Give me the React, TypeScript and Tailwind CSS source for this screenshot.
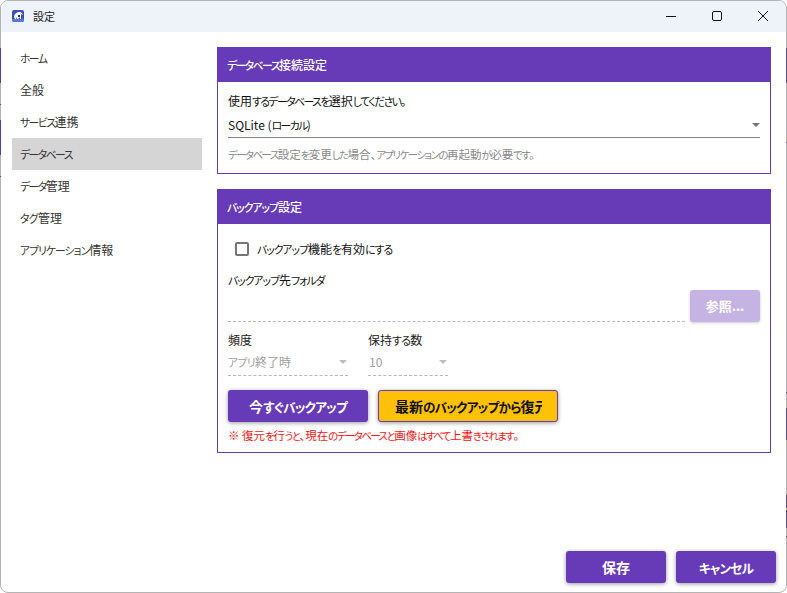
const FONT = "font-['Noto_Sans_CJK_JP','Noto_Sans',sans-serif] [font-feature-settings:'palt']";

type Fit = 'tight' | 'mid' | 'loose';

const fitClass: Record<Fit, string> = {
  tight: 'text-[0.9em] tracking-[-0.14em]',
  mid: 'text-[0.9em] tracking-[-0.09em]',
  loose: 'text-[0.9em] tracking-[-0.06em]',
};

const navItems: { label: string; fit: Fit }[] = [
  { label: 'ホーム', fit: 'tight' },
  { label: '全般', fit: 'tight' },
  { label: 'サービス連携', fit: 'tight' },
  { label: 'データベース', fit: 'tight' },
  { label: 'データ管理', fit: 'tight' },
  { label: 'タグ管理', fit: 'loose' },
  { label: 'アプリケーション情報', fit: 'mid' },
];

// slivers of the window behind this one, showing at the edges: [top, height]
const leftSlivers = [[48, 35], [104, 1], [120, 35], [176, 1]];
const rightSlivers = [[48, 35], [142, 1], [392, 1], [408, 32], [495, 13], [510, 18], [536, 1]];

// the reference font has much narrower kana than Noto, so kana runs get tightened
function Jp({ text, fit = 'tight' }: { text: string; fit?: Fit }) {
  return (
    <>
      {text.split(/([\u3040-\u30ff]+)/).map((part, i) =>
        i % 2 === 1 ? (
          <span key={i} className={fitClass[fit]}>{part}</span>
        ) : (
          part
        )
      )}
    </>
  );
}

function Arrow({ muted }: { muted?: boolean }) {
  return (
    <svg width="8" height="4" viewBox="0 0 8 4" className="shrink-0">
      <path d="M0 0h8L4 4z" fill={muted ? '#bdbdbd' : '#757575'} />
    </svg>
  );
}

function Panel({ title, fit, children }: { title: string; fit?: Fit; children: React.ReactNode }) {
  return (
    <section className="border border-[#673ab7] bg-white">
      <h2 className="flex h-[34px] items-center bg-[#673ab7] px-[9px] text-[12px] font-medium text-white">
        <span><Jp text={title} fit={fit} /></span>
      </h2>
      {children}
    </section>
  );
}

function PurpleButton({ label, className }: { label: string; className: string }) {
  return (
    <button className={`flex h-8 items-center justify-center rounded-[3px] bg-[#673ab7] text-[14px] font-bold text-white shadow-[0_1px_4px_rgba(0,0,0,0.4)] ${className}`}>
      <span><Jp text={label} fit="loose" /></span>
    </button>
  );
}

export default function App() {
  return (
    <div className={`${FONT} relative h-[593px] w-[787px] overflow-hidden bg-white text-[12px] text-[#1a1a1a]`}>
      <div className="flex h-[593px] flex-col overflow-hidden rounded-[8px] border border-[#b4b4b4] bg-white">
        {/* title bar */}
        <header className="flex h-[31px] shrink-0 items-center bg-[#eef2f9]">
          <svg width="12" height="12" viewBox="0 0 12 12" className="mb-[2px] ml-[11px]">
            <rect width="12" height="12" rx="2" fill="#3b50b4" />
            <path d="M0 9h12v1a2 2 0 0 1-2 2H2a2 2 0 0 1-2-2z" fill="#5b78d8" />
            <path d="M2 7c0-3 3-5 6-5 1 0 2 1 3 3L9 4v5H8V7L6 9H5V7L4 9H3z" fill="#ffffff" />
            <path d="M6 5h2v2H6z" fill="#27307e" />
          </svg>
          <span className="ml-[9px] text-[11px] text-[#222]">設定</span>
          <div className="ml-auto flex items-center">
            <svg width="46" height="31" viewBox="0 0 46 31"><path d="M18 15.5h10" stroke="#111" strokeWidth="1" /></svg>
            <svg width="46" height="31" viewBox="0 0 46 31"><rect x="18.5" y="10.5" width="9" height="9" rx="1.5" fill="none" stroke="#111" strokeWidth="1" /></svg>
            <svg width="46" height="31" viewBox="0 0 46 31"><path d="M18 10l10 10M28 10L18 20" stroke="#111" strokeWidth="1" /></svg>
          </div>
        </header>

        <div className="flex min-h-0 flex-1">
          {/* sidebar */}
          <nav className="ml-[11px] mt-[10px] w-[190px] shrink-0">
            {navItems.map(item => (
              <div key={item.label} className={`flex h-8 items-center px-2 text-[12px] text-[#333] ${item.label === 'データベース' ? 'bg-[#d5d5d5]' : ''}`}>
                <span><Jp text={item.label} fit={item.fit} /></span>
              </div>
            ))}
          </nav>

          {/* content */}
          <main className="ml-[15px] mr-[15px] mt-[15px] flex flex-1 flex-col">
            <div className="flex flex-col gap-[15px]">
              <Panel title="データベース接続設定">
                <div className="h-[91px] px-[10px] pt-[10px]">
                  <p className="h-[18px] leading-[18px] text-[#111]"><Jp text="使用するデータベースを選択してください。" /></p>
                  <div className="mt-[3px] flex h-[25px] items-center justify-between border-b border-[#808080]">
                    <span className="text-[12px] text-[#111]"><Jp text="SQLite (ローカル)" /></span>
                    <Arrow />
                  </div>
                  <p className="mt-[9px] text-[11.5px] leading-[14px] text-[#8a8a8a]"><Jp text="データベース設定を変更した場合、アプリケーションの再起動が必要です。" /></p>
                </div>
              </Panel>

              <Panel title="バックアップ設定" fit="mid">
                <div className="h-[228px] px-[10px] pt-[18px]">
                  <label className="flex h-[14px] items-center pl-[7px]">
                    <span className="h-[14px] w-[14px] rounded-[2px] border-2 border-[#757575]" />
                    <span className="ml-2 text-[12px] text-[#111]"><Jp text="バックアップ機能を有効にする" fit="mid" /></span>
                  </label>
                  <p className="mt-[15px] h-[18px] leading-[18px] text-[#111]"><Jp text="バックアップ先フォルダ" fit="mid" /></p>
                  <div className="mt-[1px] flex h-8 items-end gap-[5px]">
                    <div className="flex-1 border-b border-dashed border-[#b8b8b8]" />
                    <button className="flex h-8 w-[70px] items-center justify-center rounded-[3px] bg-[#c5b4e3] text-[13px] font-bold text-white shadow-[0_1px_3px_rgba(0,0,0,0.2)]">参照...</button>
                  </div>
                  <div className="mt-[10px] flex gap-5">
                    <div className="w-[120px]">
                      <p className="h-4 leading-4 text-[#222]">頻度</p>
                      <div className="mt-[1px] flex h-[27px] items-center justify-between border-b border-dashed border-[#b8b8b8] pr-px">
                        <span className="text-[#9e9e9e]"><Jp text="アプリ終了時" fit="loose" /></span>
                        <Arrow muted />
                      </div>
                    </div>
                    <div className="w-[80px]">
                      <p className="h-4 leading-4 text-[#222]"><Jp text="保持する数" fit="loose" /></p>
                      <div className="mt-[1px] flex h-[27px] items-center justify-between border-b border-dashed border-[#b8b8b8] pl-px pr-px">
                        <span className="text-[#9e9e9e]">10</span>
                        <Arrow muted />
                      </div>
                    </div>
                  </div>
                  <div className="mt-[14px] flex gap-[10px]">
                    <PurpleButton label="今すぐバックアップ" className="w-[140px]" />
                    <button className="h-8 w-[180px] overflow-hidden whitespace-nowrap rounded-[3px] border border-[#673ab7] bg-[#ffc107] pl-[16px] text-left text-[14px] font-bold text-[#111] shadow-[0_1px_4px_rgba(0,0,0,0.4)]">
                      <span className="block w-[147px] overflow-hidden"><Jp text="最新のバックアップから復元" fit="loose" /></span>
                    </button>
                  </div>
                  <p className="mt-[5px] text-[11.5px] leading-[16px] text-[#f01414]"><Jp text="※ 復元を行うと、現在のデータベースと画像はすべて上書きされます。" /></p>
                </div>
              </Panel>
            </div>

            {/* footer */}
            <div className="mb-[9px] mr-[-5px] mt-auto flex justify-end gap-[10px]">
              <PurpleButton label="保存" className="w-[100px]" />
              <PurpleButton label="キャンセル" className="w-[100px]" />
            </div>
          </main>
        </div>
      </div>

      {leftSlivers.map(([top, height]) => (
        <div key={top} className="absolute left-0 w-px bg-[#5f3aa6]" style={{ top, height }} />
      ))}
      {rightSlivers.map(([top, height]) => (
        <div key={top} className="absolute right-0 w-px bg-[#5f4a96]" style={{ top, height }} />
      ))}
    </div>
  );
}
